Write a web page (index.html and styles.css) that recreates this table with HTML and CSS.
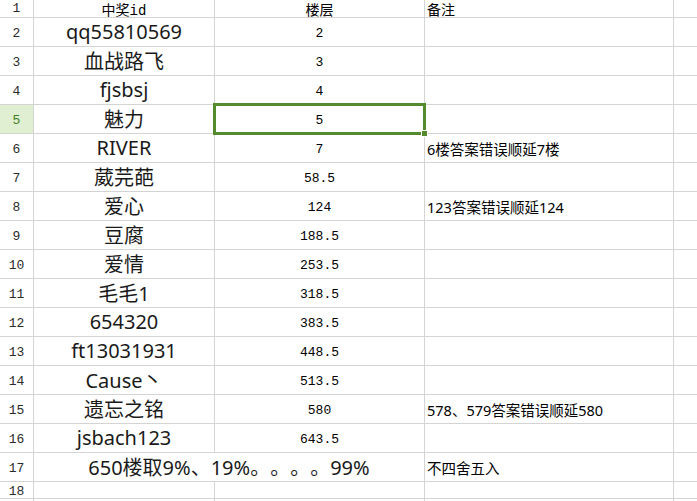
FILE: index.html
```html
<!DOCTYPE html>
<html lang="zh-CN">
<head>
<meta charset="utf-8">
<title>中奖名单</title>
<link rel="stylesheet" href="styles.css">
</head>
<body>
<div class="sheet">
  <div class="rn r1">1</div><div class="cell a hdr">中奖id</div><div class="cell b hdr">楼层</div><div class="cell c hdr">备注</div><div class="cell"></div>

  <div class="rn">2</div><div class="cell a">qq55810569</div><div class="cell b">2</div><div class="cell c"></div><div class="cell"></div>
  <div class="rn">3</div><div class="cell a">血战路飞</div><div class="cell b">3</div><div class="cell c"></div><div class="cell"></div>
  <div class="rn">4</div><div class="cell a">fjsbsj</div><div class="cell b">4</div><div class="cell c"></div><div class="cell"></div>
  <div class="rn active">5</div><div class="cell a">魅力</div><div class="cell b selected">5<span class="sel-box"></span><span class="sel-handle"></span></div><div class="cell c"></div><div class="cell"></div>
  <div class="rn">6</div><div class="cell a">RIVER</div><div class="cell b">7</div><div class="cell c">6楼答案错误顺延7楼</div><div class="cell"></div>
  <div class="rn">7</div><div class="cell a">葳芫葩</div><div class="cell b">58.5</div><div class="cell c"></div><div class="cell"></div>
  <div class="rn">8</div><div class="cell a">爱心</div><div class="cell b">124</div><div class="cell c">123答案错误顺延124</div><div class="cell"></div>
  <div class="rn">9</div><div class="cell a">豆腐</div><div class="cell b">188.5</div><div class="cell c"></div><div class="cell"></div>
  <div class="rn">10</div><div class="cell a">爱情</div><div class="cell b">253.5</div><div class="cell c"></div><div class="cell"></div>
  <div class="rn">11</div><div class="cell a">毛毛1</div><div class="cell b">318.5</div><div class="cell c"></div><div class="cell"></div>
  <div class="rn">12</div><div class="cell a">654320</div><div class="cell b">383.5</div><div class="cell c"></div><div class="cell"></div>
  <div class="rn">13</div><div class="cell a">ft13031931</div><div class="cell b">448.5</div><div class="cell c"></div><div class="cell"></div>
  <div class="rn">14</div><div class="cell a">Cause丶</div><div class="cell b">513.5</div><div class="cell c"></div><div class="cell"></div>
  <div class="rn">15</div><div class="cell a">遗忘之铭</div><div class="cell b">580</div><div class="cell c">578、579答案错误顺延580</div><div class="cell"></div>
  <div class="rn">16</div><div class="cell a">jsbach123</div><div class="cell b">643.5</div><div class="cell c"></div><div class="cell"></div>
  <div class="rn">17</div><div class="cell a merged">650楼取9%、19%。。。。99%</div><div class="cell c">不四舍五入</div><div class="cell"></div>
  <div class="rn r18">18</div><div class="cell"></div><div class="cell"></div><div class="cell"></div><div class="cell"></div>
  <div class="rn"></div><div class="cell"></div><div class="cell"></div><div class="cell"></div><div class="cell"></div>
</div>
</body>
</html>
```

FILE: styles.css
```css
html, body {
  margin: 0;
  padding: 0;
  background: #ffffff;
  overflow: hidden;
}

.sheet {
  display: grid;
  grid-template-columns: 33px 180px 209px 248px 1fr;
  grid-template-rows: 17px repeat(16, 28px) 16px 20px;
  gap: 1px;
  background: #d4d4d4;
  width: 697px;
  height: 520px;
  text-spacing-trim: space-all;
}

.rn {
  background: #ffffff;
  display: flex;
  align-items: center;
  justify-content: center;
  font-family: "Liberation Mono", monospace;
  font-size: 13px;
  color: #2b2b2b;
  padding-top: 2px;
}

.rn.r1 {
  padding-top: 0;
}

.rn.active {
  background: #e0eed2;
  color: #3f7f1f;
}

.cell {
  background: #ffffff;
  display: flex;
  align-items: center;
  min-width: 0;
  white-space: nowrap;
  color: #1a1a1a;
}

.a {
  justify-content: center;
  font-family: "Noto Sans", "Noto Sans CJK SC", sans-serif;
  font-size: 20px;
  padding-bottom: 2px;
}

.b {
  justify-content: center;
  font-family: "Liberation Mono", "Noto Sans CJK SC", monospace;
  font-size: 13px;
  color: #000000;
  padding-top: 3px;
}

.c {
  justify-content: flex-start;
  padding-left: 2px;
  font-family: "Noto Sans", "Noto Sans CJK SC", sans-serif;
  font-size: 14.5px;
  color: #000000;
  padding-top: 1px;
}

.hdr {
  font-family: "Liberation Mono", "Noto Sans CJK SC", monospace;
  font-size: 14px;
  color: #000000;
  padding-top: 0;
  padding-bottom: 0;
}

.c.hdr {
  font-family: "Noto Sans CJK SC", sans-serif;
}

.merged {
  grid-column: span 2;
  text-spacing-trim: space-all;
  font-feature-settings: "halt" 0, "chws" 0;
}

.selected {
  position: relative;
}

.sel-box {
  position: absolute;
  top: -2px;
  left: -2px;
  right: -2px;
  bottom: -2px;
  border: 3px solid #558b2f;
  pointer-events: none;
}

.sel-handle {
  position: absolute;
  width: 5px;
  height: 5px;
  right: -3px;
  bottom: -3px;
  background: #558b2f;
  box-shadow: 0 0 0 1px #ffffff;
}
```
